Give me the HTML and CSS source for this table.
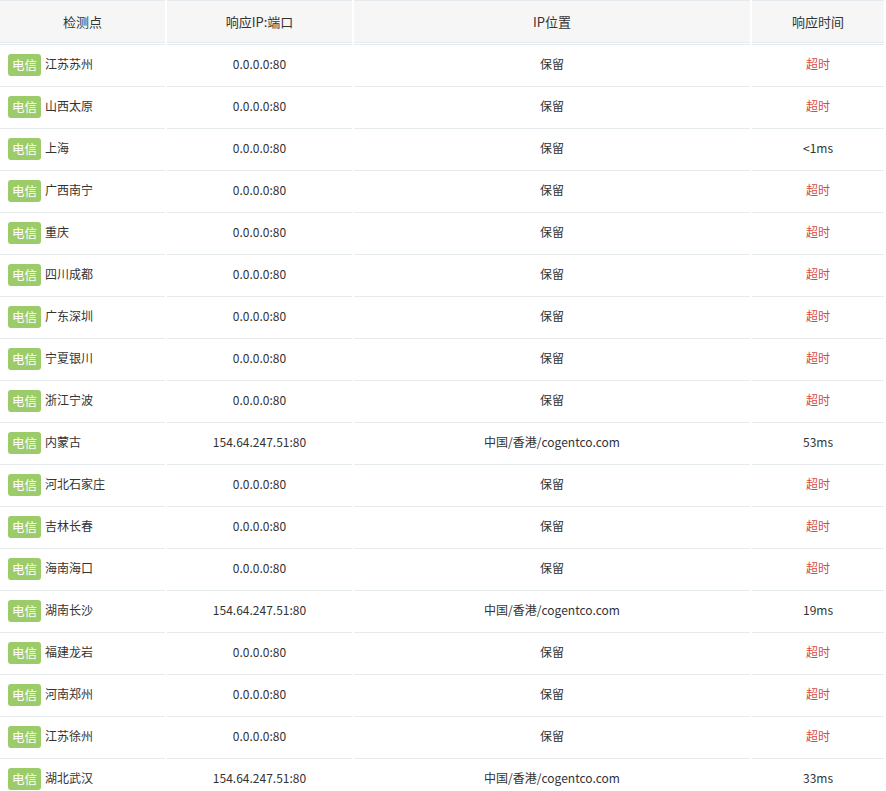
FILE: index.html
```html
<!DOCTYPE html>
<html lang="zh-CN">
<head>
<meta charset="utf-8">
<title>检测结果</title>
<link rel="stylesheet" href="styles.css">
</head>
<body>
<table class="result">
  <colgroup>
    <col class="c1"><col class="c2"><col class="c3"><col class="c4">
  </colgroup>
  <thead>
    <tr><th>检测点</th><th>响应IP:端口</th><th>IP位置</th><th>响应时间</th></tr>
  </thead>
  <tbody>
    <tr><td class="node"><span class="isp">电信</span><span class="city">江苏苏州</span></td><td>0.0.0.0:80</td><td>保留</td><td class="timeout">超时</td></tr>
    <tr><td class="node"><span class="isp">电信</span><span class="city">山西太原</span></td><td>0.0.0.0:80</td><td>保留</td><td class="timeout">超时</td></tr>
    <tr><td class="node"><span class="isp">电信</span><span class="city">上海</span></td><td>0.0.0.0:80</td><td>保留</td><td>&lt;1ms</td></tr>
    <tr><td class="node"><span class="isp">电信</span><span class="city">广西南宁</span></td><td>0.0.0.0:80</td><td>保留</td><td class="timeout">超时</td></tr>
    <tr><td class="node"><span class="isp">电信</span><span class="city">重庆</span></td><td>0.0.0.0:80</td><td>保留</td><td class="timeout">超时</td></tr>
    <tr><td class="node"><span class="isp">电信</span><span class="city">四川成都</span></td><td>0.0.0.0:80</td><td>保留</td><td class="timeout">超时</td></tr>
    <tr><td class="node"><span class="isp">电信</span><span class="city">广东深圳</span></td><td>0.0.0.0:80</td><td>保留</td><td class="timeout">超时</td></tr>
    <tr><td class="node"><span class="isp">电信</span><span class="city">宁夏银川</span></td><td>0.0.0.0:80</td><td>保留</td><td class="timeout">超时</td></tr>
    <tr><td class="node"><span class="isp">电信</span><span class="city">浙江宁波</span></td><td>0.0.0.0:80</td><td>保留</td><td class="timeout">超时</td></tr>
    <tr><td class="node"><span class="isp">电信</span><span class="city">内蒙古</span></td><td>154.64.247.51:80</td><td>中国/香港/cogentco.com</td><td>53ms</td></tr>
    <tr><td class="node"><span class="isp">电信</span><span class="city">河北石家庄</span></td><td>0.0.0.0:80</td><td>保留</td><td class="timeout">超时</td></tr>
    <tr><td class="node"><span class="isp">电信</span><span class="city">吉林长春</span></td><td>0.0.0.0:80</td><td>保留</td><td class="timeout">超时</td></tr>
    <tr><td class="node"><span class="isp">电信</span><span class="city">海南海口</span></td><td>0.0.0.0:80</td><td>保留</td><td class="timeout">超时</td></tr>
    <tr><td class="node"><span class="isp">电信</span><span class="city">湖南长沙</span></td><td>154.64.247.51:80</td><td>中国/香港/cogentco.com</td><td>19ms</td></tr>
    <tr><td class="node"><span class="isp">电信</span><span class="city">福建龙岩</span></td><td>0.0.0.0:80</td><td>保留</td><td class="timeout">超时</td></tr>
    <tr><td class="node"><span class="isp">电信</span><span class="city">河南郑州</span></td><td>0.0.0.0:80</td><td>保留</td><td class="timeout">超时</td></tr>
    <tr><td class="node"><span class="isp">电信</span><span class="city">江苏徐州</span></td><td>0.0.0.0:80</td><td>保留</td><td class="timeout">超时</td></tr>
    <tr><td class="node"><span class="isp">电信</span><span class="city">湖北武汉</span></td><td>154.64.247.51:80</td><td>中国/香港/cogentco.com</td><td>33ms</td></tr>
  </tbody>
</table>
</body>
</html>
```

FILE: styles.css
```css
html, body {
  margin: 0;
  padding: 0;
  background: #ffffff;
}
body {
  font-family: "Noto Sans CJK SC", "Noto Sans", sans-serif;
  color: #333333;
  overflow: hidden;
}
.result {
  border-collapse: separate;
  border-spacing: 2px 1px;
  table-layout: fixed;
  width: 888px;
  margin: -1px 0 0 -2px;
}
.c1 { width: 165px; }
.c2 { width: 185px; }
.c3 { width: 396px; }
.c4 { width: 132px; }
.result th {
  height: 41px;
  padding: 0;
  background: #f6f6f6;
  border-top: 1px solid #e4eaee;
  border-bottom: 1px solid #e4eaee;
  font-size: 13px;
  font-weight: normal;
  color: #333333;
  text-align: center;
  vertical-align: middle;
}
.result td {
  height: 38px;
  padding: 0 0 2px;
  border-top: 1px solid #e6ebee;
  font-size: 12px;
  line-height: 16px;
  color: #333333;
  text-align: center;
  vertical-align: middle;
  white-space: nowrap;
}
.result td.node {
  text-align: left;
  padding: 2px 0 2px 8px;
  height: 36px;
}
.isp {
  display: inline-block;
  vertical-align: middle;
  height: 22px;
  line-height: 21px;
  padding: 0 4px;
  margin-right: 4px;
  border-radius: 3px;
  background: #9ccb6a;
  color: #ffffff;
  font-size: 12.5px;
}
.city {
  display: inline-block;
  vertical-align: middle;
  line-height: 16px;
  padding-bottom: 2px;
}
.timeout {
  color: #d84a4a !important;
}
```
